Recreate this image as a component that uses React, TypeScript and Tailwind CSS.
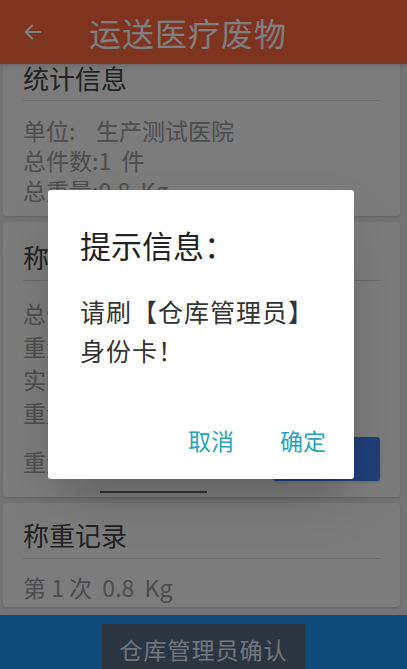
import React from 'react';

const cjk = { fontFamily: '"Noto Sans CJK SC", "Noto Sans", sans-serif' };

const InfoRow: React.FC<{ children: React.ReactNode; className?: string }> = ({ children, className = '' }) => (
  <div className={`text-[23px] leading-[30px] text-[#9c9c9c] whitespace-pre ${className}`}>{children}</div>
);

const CardTitle: React.FC<{ title: string; className?: string }> = ({ title, className = '' }) => (
  <div className={`flex items-center border-b border-[#d6d6d6] text-[26px] text-[#454545] ${className}`}>{title}</div>
);

const App: React.FC = () => {
  return (
    <div className="relative w-[407px] h-[669px] overflow-hidden flex flex-col bg-[#e8e8e8]" style={cjk}>
      {/* toolbar */}
      <div className="relative z-10 h-[64px] shrink-0 flex items-center bg-[#fc6840] shadow-md">
        <svg className="ml-[22px] w-[22px] h-[22px]" viewBox="0 0 24 24" fill="none" stroke="#ffffff" strokeWidth="2.2" strokeLinecap="round" strokeLinejoin="round">
          <path d="M20 12H4M11 5l-7 7 7 7" />
        </svg>
        <span className="ml-[45px] text-[32px] text-white tracking-[1px]">运送医疗废物</span>
      </div>

      {/* scrolled content */}
      <div className="flex-1 overflow-hidden">
        <div className="-mt-[20px] flex flex-col gap-[6px] ml-[3px] mr-[7px]">
          <div className="bg-[#f8f8f8] rounded-[4px] shadow-sm px-[20px] pt-[10px] pb-[11px]">
            <CardTitle title="统计信息" className="h-[47px]" />
            <div className="pt-[14px]">
              <InfoRow>单位:    生产测试医院</InfoRow>
              <InfoRow>总件数:1  件</InfoRow>
              <InfoRow>总重量:0.8  Kg</InfoRow>
            </div>
          </div>

          <div className="bg-[#f8f8f8] rounded-[4px] shadow-sm px-[20px] pt-[10px] pb-[4px]">
            <CardTitle title="称重信息" className="h-[49px]" />
            <div className="pt-[16px] flex flex-col">
              <InfoRow className="leading-[33px]">总件数:1  件</InfoRow>
              <InfoRow className="leading-[33px]">重量:0.8  Kg</InfoRow>
              <InfoRow className="leading-[33px]">实际重量:0.8  Kg</InfoRow>
              <InfoRow className="leading-[33px]">重量差:0  Kg</InfoRow>
              <div className="mt-[8px] flex items-start">
                <InfoRow className="w-[77px] pt-[9px]">重量:</InfoRow>
                <div className="w-[107px] h-[56px] border-b-2 border-[#666666]" />
                <button className="ml-auto w-[107px] h-[44px] rounded-[3px] bg-[#3f7ef0] text-white text-[20px] shadow">称重</button>
              </div>
            </div>
          </div>

          <div className="bg-[#f8f8f8] rounded-[4px] shadow-sm px-[20px] pt-[8px] pb-[5px]">
            <CardTitle title="称重记录" className="h-[48px]" />
            <div className="pt-[13px]">
              <InfoRow>第 1 次  0.8  Kg</InfoRow>
            </div>
          </div>
        </div>
      </div>

      {/* bottom bar */}
      <div className="h-[54px] shrink-0 bg-[#2196f3] flex justify-center pt-[9px]">
        <button className="w-[203px] h-[50px] bg-[#586a80] text-[#e4ecf6] text-[23px] tracking-[1px]">仓库管理员确认</button>
      </div>

      {/* modal */}
      <div className="absolute inset-0 z-20 bg-black/50 flex items-center justify-center">
        <div className="w-[306px] h-[289px] -ml-[5px] bg-white rounded-[3px] shadow-2xl flex flex-col px-[32px] pt-[34px] pb-[22px]">
          <div className="text-[31px] leading-[42px] text-[#222222]">提示信息：</div>
          <div className="mt-[26px] text-[25px] leading-[39px] tracking-[1px] text-[#333333]">
            请刷【仓库管理员】
            <br />
            身份卡！
          </div>
          <div className="mt-auto flex justify-end gap-[46px] -mr-[4px] text-[23px] text-[#27a4b6]">
            <button>取消</button>
            <button>确定</button>
          </div>
        </div>
      </div>
    </div>
  );
};

export default App;
